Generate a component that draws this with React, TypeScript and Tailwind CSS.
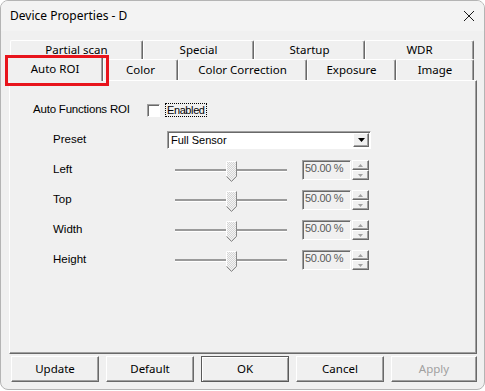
import React from "react";

const chrome = "font-['Noto_Sans',Arial,sans-serif]";
const gothic = "font-['Liberation_Sans',Arial,sans-serif]";

interface TabProps {
  label: string;
  w: string;
  active?: boolean;
}

const Tab = (props: TabProps) => {
  const { label, w, active } = props;
  if (active) {
    return (
      <div
        className={
          "relative z-10 -mb-[1px] flex h-[25px] items-start justify-center rounded-t-[2px] border-l border-t border-r border-l-white border-t-white border-r-[#696969] bg-[#f0f0f0] pt-[3px] text-[11.5px] text-black shadow-[inset_-1px_0_0_#a0a0a0] " +
          w
        }
      >
        {label}
      </div>
    );
  }
  return (
    <div
      className={
        "flex h-full items-center justify-center rounded-t-[2px] border-l border-t border-r border-l-white border-t-white border-r-[#696969] bg-[#f0f0f0] text-[11.5px] text-black shadow-[inset_-1px_0_0_#a0a0a0] " +
        w
      }
    >
      {label}
    </div>
  );
};

const Thumb = () => (
  <svg width="11" height="21" viewBox="0 0 11 21" className="block">
    <defs>
      <pattern id="dith" width="2" height="2" patternUnits="userSpaceOnUse">
        <rect width="2" height="2" fill="#f4f4f4" />
        <rect width="1" height="1" fill="#d6d6d6" />
        <rect x="1" y="1" width="1" height="1" fill="#d6d6d6" />
      </pattern>
    </defs>
    <path d="M0.5 0.5 H10.5 V15.5 L5.5 20.5 L0.5 15.5 Z" fill="url(#dith)" />
    <path d="M0.5 15.5 V0.5 H10" stroke="#ffffff" fill="none" />
    <path d="M10.5 0.5 V15.5 L5.5 20.5 L0.5 15.5" stroke="#8a8a8a" fill="none" />
  </svg>
);

const SpinHalf = ({ up }: { up?: boolean }) => (
  <div className="flex h-[10px] w-[17px] items-center justify-center border border-t-white border-l-white border-r-[#696969] border-b-[#696969] bg-[#f0f0f0] shadow-[inset_-1px_-1px_0_#a0a0a0]">
    <svg width="5" height="3" viewBox="0 0 5 3">
      {up ? (
        <path d="M2.5 0 L5 3 H0 Z" fill="#a0a0a0" />
      ) : (
        <path d="M0 0 H5 L2.5 3 Z" fill="#a0a0a0" />
      )}
    </svg>
  </div>
);

const SliderRow = ({ label }: { label: string }) => (
  <div className="flex h-[20px] items-center">
    <div className="w-[165px] pl-[43px] text-[11.5px] text-black">{label}</div>
    <div className="relative flex h-[20px] w-[112px] items-center">
      <div className="h-[2px] w-full bg-[#9a9a9a] shadow-[0_1px_0_#ffffff]" />
      <div className="absolute left-[51px] top-[1px]">
        <Thumb />
      </div>
    </div>
    <div className="ml-[15px] h-[20px] w-[49px] border border-t-[#a0a0a0] border-l-[#a0a0a0] border-r-white border-b-white bg-[#f0f0f0] pl-[2px] pt-[1px] text-[11px] leading-[13px] tracking-[-0.3px] text-[#5a5a5a] shadow-[inset_1px_1px_0_#696969]">
      50.00 %
    </div>
    <div className="ml-[1px] flex flex-col">
      <SpinHalf up />
      <SpinHalf />
    </div>
  </div>
);

const Btn = ({
  label,
  w,
  def,
  disabled,
}: {
  label: string;
  w: string;
  def?: boolean;
  disabled?: boolean;
}) => (
  <div
    className={
      "flex h-[26px] items-center justify-center border bg-[#f0f0f0] text-[11.5px] " +
      (def
        ? "border-[#5a5a5a] shadow-[inset_1px_1px_0_#ffffff,inset_-1px_-1px_0_#a0a0a0] "
        : "border-t-white border-l-white border-r-[#696969] border-b-[#696969] shadow-[inset_-1px_-1px_0_#a0a0a0] ") +
      (disabled ? "text-[#a0a0a0] " : "text-black ") +
      w
    }
  >
    {label}
  </div>
);

export default function App() {
  return (
    <div className="h-[391px] w-[485px] bg-white">
      <div
        className={
          "flex h-[390px] w-[485px] flex-col overflow-hidden rounded-[8px] border border-[#b4b4b4] bg-[#f0f0f0] " +
          chrome
        }
      >
        {/* title bar */}
        <div className="flex h-[30px] items-center justify-between bg-[#f3f3f3] pl-[9px] pr-[9px]">
          <span className="text-[12px] text-black">Device Properties - D</span>
          <svg width="12" height="12" viewBox="0 0 12 12">
            <path d="M1 1 L11 11 M11 1 L1 11" stroke="#1a1a1a" strokeWidth="1" />
          </svg>
        </div>

        {/* tabs */}
        <div className="ml-[9px] mt-[9px] flex h-[19px]">
          <Tab label="Partial scan" w="w-[133px]" />
          <Tab label="Special" w="w-[111px]" />
          <Tab label="Startup" w="w-[111px]" />
          <Tab label="WDR" w="w-[109px]" />
        </div>
        <div className="relative ml-[6px] flex h-[21px] items-end">
          <Tab label="Auto ROI" w="w-[96px]" active />
          <Tab label="Color" w="w-[75px]" />
          <Tab label="Color Correction" w="w-[129px]" />
          <Tab label="Exposure" w="w-[89px]" />
          <Tab label="Image" w="w-[78px]" />
          <div className="pointer-events-none absolute left-[-2px] top-[-4px] z-20 h-[31px] w-[104px] border-[3px] border-[#e8141c]" />
        </div>

        {/* panel */}
        <div
          className={
            "ml-[8px] flex h-[274px] w-[468px] flex-col gap-[10px] border border-t-white border-l-white border-r-[#696969] border-b-[#696969] pt-[19px] shadow-[inset_-1px_-1px_0_#a0a0a0] " +
            gothic
          }
        >
          <div className="flex h-[20px] items-center">
            <div className="w-[137px] pl-[23px] text-[11.5px] tracking-[-0.2px] text-black">
              Auto Functions ROI
            </div>
            <div className="h-[13px] w-[13px] border border-t-[#a0a0a0] border-l-[#a0a0a0] border-r-white border-b-white bg-white shadow-[inset_1px_1px_0_#696969]" />
            <div className="ml-[5px] border border-dotted border-black px-[1px] text-[11px] leading-[12px] tracking-[-0.4px] text-black">
              Enabled
            </div>
          </div>
          <div className="flex h-[20px] items-center">
            <div className="w-[157px] pl-[43px] text-[11.5px] text-black">Preset</div>
            <div className="flex h-[18px] w-[204px] items-center justify-between border border-t-[#a0a0a0] border-l-[#a0a0a0] border-r-white border-b-white bg-white shadow-[inset_1px_1px_0_#696969]">
              <span className="pl-[3px] text-[11px] text-black">Full Sensor</span>
              <div className="mr-[1px] flex h-[14px] w-[16px] items-center justify-center border border-t-white border-l-white border-r-[#696969] border-b-[#696969] bg-[#f0f0f0] shadow-[inset_-1px_-1px_0_#a0a0a0]">
                <svg width="7" height="4" viewBox="0 0 7 4">
                  <path d="M0 0 H7 L3.5 4 Z" fill="#000" />
                </svg>
              </div>
            </div>
          </div>
          <SliderRow label="Left" />
          <SliderRow label="Top" />
          <SliderRow label="Width" />
          <SliderRow label="Height" />
        </div>

        {/* buttons */}
        <div className="ml-[10px] mt-[2px] flex gap-[7px]">
          <Btn label="Update" w="w-[88px]" />
          <Btn label="Default" w="w-[88px]" />
          <Btn label="OK" w="w-[88px]" def />
          <Btn label="Cancel" w="w-[88px]" />
          <Btn label="Apply" w="w-[86px]" disabled />
        </div>
      </div>
    </div>
  );
}
